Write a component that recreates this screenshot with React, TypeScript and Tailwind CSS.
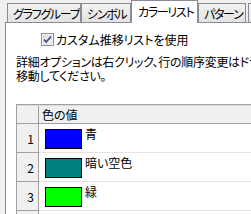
const tabs = [
    { label: 'グラフグループ', width: 'w-[74px]' },
    { label: 'シンボル', width: 'w-[50px]' },
    { label: 'カラーリスト', width: 'w-[67px]', active: true },
    { label: 'パターン', width: 'w-[48px]' },
    { label: '', width: 'w-[10px]' },
];

const colors = [
    { n: 1, name: '青', swatch: 'bg-[#0000ff]' },
    { n: 2, name: '暗い空色', swatch: 'bg-[#008080]' },
    { n: 3, name: '緑', swatch: 'bg-[#00ff00]' },
    { n: 4, name: '', swatch: '' },
];

const CheckIcon = () => (
    <svg width="13" height="13" viewBox="0 0 13 13" className="shrink-0">
        <defs>
            <linearGradient id="cb" x1="0" y1="0" x2="1" y2="1">
                <stop offset="0" stopColor="#dcdcdc" />
                <stop offset="1" stopColor="#fbfbfb" />
            </linearGradient>
        </defs>
        <rect x="0.5" y="0.5" width="12" height="12" fill="#fff" stroke="#8e8f8f" />
        <rect x="2" y="2" width="9" height="9" fill="url(#cb)" stroke="#c6c6c6" strokeWidth="0.5" />
        <path d="M3 6.5 L5.2 9 L10 3.5" fill="none" stroke="#3c4f8c" strokeWidth="1.8" />
    </svg>
);

export default function App() {
    return (
        <div className="w-[251px] h-[214px] overflow-hidden bg-[#f0f0f0] text-black text-[12px] leading-[13px] [font-family:'Noto_Sans_CJK_JP',sans-serif] [font-feature-settings:'palt']">
            {/* tab strip */}
            <div className="flex items-end h-[22px] pl-[7px] tracking-[-1.3px]">
                {tabs.map((t, i) =>
                    t.active ? (
                        <div
                            key={i}
                            className={`${t.width} h-[23px] -mb-px relative z-10 bg-white border border-b-0 border-[#898c95] flex items-start pt-[4px] pl-[6px] shrink-0 whitespace-nowrap overflow-hidden`}
                        >
                            {t.label}
                        </div>
                    ) : (
                        <div
                            key={i}
                            className={`${t.width} h-[19px] bg-gradient-to-b from-[#f2f2f2] to-[#e3e3e3] border border-b-0 border-[#898c95] flex items-center pl-[5px] shrink-0 whitespace-nowrap overflow-hidden ${i === 4 ? 'ml-[2px]' : ''}`}
                        >
                            {t.label}
                        </div>
                    )
                )}
            </div>

            {/* panel */}
            <div className="ml-[5px] h-[192px] bg-white border-l border-t border-[#898c95] pl-[10px]">
                <div className="flex items-center gap-[2px] ml-[25px] mt-[9px] h-[14px]">
                    <CheckIcon />
                    <span>カスタム推移リストを使用</span>
                </div>
                <p className="mt-[9px] whitespace-nowrap leading-[14px] tracking-[-0.3px]">
                    詳細オプションは右クリック、行の順序変更はドラッグして
                    <br />
                    移動してください。
                </p>

                {/* grid */}
                <div className="mt-[21px] border-t border-l border-[#a0a0a0] w-[260px]">
                    <div className="flex h-[19px] border-b border-[#a0a0a0] bg-[#f0f0f0] border-t border-t-[#dcdcdc]">
                        <div className="w-[22px] border-r border-[#a0a0a0]" />
                        <div className="flex-1 pl-[3px] flex items-center">色の値</div>
                    </div>
                    {colors.map(c => (
                        <div key={c.n} className="flex h-[29px]">
                            <div className="w-[22px] bg-[#f0f0f0] border-r border-b border-[#a0a0a0] flex items-center justify-end pr-[4px]">
                                {c.name ? c.n : ''}
                            </div>
                            <div className="flex-1 bg-white border-b border-[#e3e3e3] flex items-start pt-[5px] pl-[6px]">
                                {c.swatch && <div className={`w-[37px] h-[20px] border border-black ${c.swatch}`} />}
                                <span className="ml-[3px] -mt-[2px]">{c.name}</span>
                            </div>
                        </div>
                    ))}
                </div>
            </div>
        </div>
    );
}
